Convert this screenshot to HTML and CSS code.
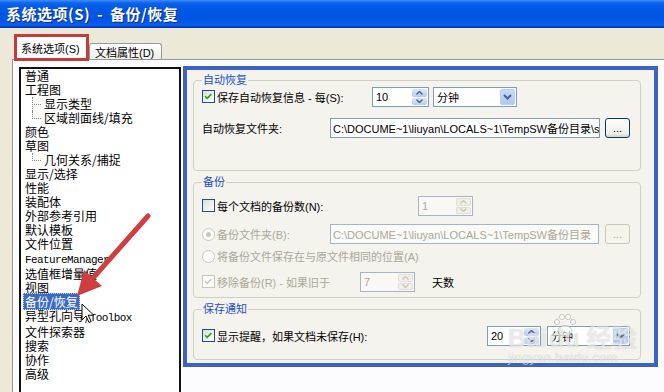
FILE: index.html
```html
<!DOCTYPE html>
<html lang="zh-CN">

<head>
  <meta charset="UTF-8">
  <title>系统选项(S) - 备份/恢复</title>
  <link rel="stylesheet" href="styles.css">
</head>

<body>
  <div class="titlebar"><span class="title">系统选项(S) - 备份/恢复</span></div>

  <div class="tabs">
    <div class="tab active">系统选项(S)</div>
    <div class="tab">文档属性(D)</div>
  </div>

  <div class="page">
    <ul class="tree">
      <li>普通</li>
      <li>工程图</li>
      <li class="child more">显示类型</li>
      <li class="child">区域剖面线/填充</li>
      <li>颜色</li>
      <li>草图</li>
      <li class="child">几何关系/捕捉</li>
      <li>显示/选择</li>
      <li>性能</li>
      <li>装配体</li>
      <li>外部参考引用</li>
      <li>默认模板</li>
      <li>文件位置</li>
      <li><span class="en">FeatureManager</span></li>
      <li>选值框增量值</li>
      <li>视图</li>
      <li><span class="sel">备份/恢复</span></li>
      <li>异型孔向导/<span class="en">Toolbox</span></li>
      <li>文件探索器</li>
      <li>搜索</li>
      <li>协作</li>
      <li>高级</li>
    </ul>

    <div class="frame">
      <!-- auto recover -->
      <fieldset class="group g1">
        <legend>自动恢复</legend>
        <div class="row">
          <label class="opt w170"><span class="cb on"><svg viewBox="0 0 13 13"><path d="M2.5 6.2l2.4 2.5 5-5"/></svg></span>保存自动恢复信息 - 每(S):</label>
          <div class="spin w57"><span class="val">10</span><span class="btns"><span class="sb"><svg viewBox="0 0 7 4"><path d="M0.5 3.5l3-3 3 3"/></svg></span><span class="sb"><svg viewBox="0 0 7 4"><path d="M0.5 0.5l3 3 3-3"/></svg></span></span></div>
          <div class="combo w84"><span class="val">分钟</span><span class="drop"><svg viewBox="0 0 9 6"><path d="M1 1l3.5 3.5 3.5-3.5"/></svg></span></div>
        </div>
        <div class="row mt11">
          <span class="w128">自动恢复文件夹:</span>
          <div class="field w270">C:\DOCUME~1\liuyan\LOCALS~1\TempSW备份目录\s</div>
          <div class="btn">...</div>
        </div>
      </fieldset>

      <!-- backup -->
      <fieldset class="group g2">
        <legend>备份</legend>
        <div class="row">
          <label class="opt w216"><span class="cb"></span>每个文档的备份数(N):</label>
          <div class="spin w55 off"><span class="val">1</span><span class="btns"><span class="sb"><svg viewBox="0 0 7 4"><path d="M0.5 3.5l3-3 3 3"/></svg></span><span class="sb"><svg viewBox="0 0 7 4"><path d="M0.5 0.5l3 3 3-3"/></svg></span></span></div>
        </div>
        <div class="row mt8">
          <label class="opt w128 dim"><span class="rb on"></span>备份文件夹(B):</label>
          <div class="field w269 off">C:\DOCUME~1\liuyan\LOCALS~1\TempSW备份目录</div>
          <div class="btn off">...</div>
        </div>
        <div class="row short mt3">
          <label class="opt dim"><span class="rb"></span>将备份文件保存在与原文件相同的位置(A)</label>
        </div>
        <div class="row mt7">
          <label class="opt w158 dim"><span class="cb on off"><svg viewBox="0 0 13 13"><path d="M2.5 6.2l2.4 2.5 5-5"/></svg></span>移除备份(R) - 如果旧于</label>
          <div class="spin w55 off"><span class="val">7</span><span class="btns"><span class="sb"><svg viewBox="0 0 7 4"><path d="M0.5 3.5l3-3 3 3"/></svg></span><span class="sb"><svg viewBox="0 0 7 4"><path d="M0.5 0.5l3 3 3-3"/></svg></span></span></div>
          <span class="days">天数</span>
        </div>
      </fieldset>

      <!-- save notification -->
      <fieldset class="group g3">
        <legend>保存通知</legend>
        <div class="row">
          <label class="opt w285"><span class="cb on"><svg viewBox="0 0 13 13"><path d="M2.5 6.2l2.4 2.5 5-5"/></svg></span>显示提醒，如果文档未保存(H):</label>
          <div class="spin w54"><span class="val">20</span><span class="btns"><span class="sb"><svg viewBox="0 0 7 4"><path d="M0.5 3.5l3-3 3 3"/></svg></span><span class="sb"><svg viewBox="0 0 7 4"><path d="M0.5 0.5l3 3 3-3"/></svg></span></span></div>
          <div class="combo w83"><span class="val">分钟</span><span class="drop"><svg viewBox="0 0 9 6"><path d="M1 1l3.5 3.5 3.5-3.5"/></svg></span></div>
        </div>
      </fieldset>
    </div>
  </div>

  <!-- annotation arrow and mouse pointer drawn over the dialog -->
  <svg class="marks" width="664" height="392" viewBox="0 0 664 392">
    <line x1="148" y1="216" x2="93" y2="278" stroke="#cf3f3f" stroke-width="5" stroke-linecap="round"/>
    <polygon points="77,296 84,270 102,286" fill="#cf3f3f"/>
    <path d="M82 304v16l4-4 3 6.5 2.2-1-3-6.3h5.6z" fill="#fff" stroke="#000" stroke-width="1" stroke-linejoin="round"/>
    <!-- watermark paw -->
    <g fill="rgba(255,255,255,0.6)" stroke="rgba(130,130,130,0.4)" stroke-width="1">
      <ellipse cx="565" cy="331" rx="7" ry="5.5"/>
      <circle cx="557" cy="322" r="2.6"/>
      <circle cx="562" cy="317" r="2.6"/>
      <circle cx="568" cy="317" r="2.6"/>
      <circle cx="573" cy="322" r="2.6"/>
    </g>
  </svg>

  <div class="watermark">
    <div class="wm-big">Bai<span class="gap"></span>du 经验</div>
    <div class="wm-small">jingyan.baidu.com</div>
  </div>
</body>

</html>
```

FILE: styles.css
```css
body {
  margin: 0;
  width: 664px;
  height: 392px;
  overflow: hidden;
  position: relative;
  background: #ece9d8;
  color: #000;
  font: 11px "Liberation Sans", "Noto Sans CJK SC", sans-serif;
}

.titlebar {
  height: 28px;
  box-sizing: border-box;
  padding-left: 6px;
  display: flex;
  align-items: center;
  background: linear-gradient(#3d8ffc 0, #0d63ec 3px, #0058e6 8px, #0054e2 20px, #0a61ef 25px, #003ec9 27px, #0030a6 28px);
}

.title {
  color: #fff;
  font: bold 15px "Noto Sans CJK SC", sans-serif;
  line-height: 18px;
  letter-spacing: 0.5px;
  word-spacing: 3px;
  text-shadow: 1px 1px 0 #0b2b86;
}

/* tabs */

.tabs {
  height: 31px;
  box-sizing: border-box;
  padding-left: 14px;
  display: flex;
  align-items: flex-end;
}

.tab {
  box-sizing: border-box;
  width: 73px;
  height: 16px;
  padding: 2px 0 0 5px;
  border: 1px solid #919b9c;
  border-bottom: none;
  border-radius: 3px 3px 0 0;
  background: linear-gradient(#fff, #f1efe8);
  line-height: 14px;
  white-space: nowrap;
}

.tab.active {
  width: 75px;
  height: 27px;
  margin-bottom: -2px;
  padding: 5px 0 0 4px;
  border: 3px solid #c43b3c;
  border-radius: 0;
  background: #fff;
  position: relative;
  z-index: 1;
}

/* tab page */

.page {
  height: 333px;
  box-sizing: border-box;
  margin-left: 12px;
  padding: 6px 0 0 6px;
  border-top: 1px solid #919b9c;
  border-left: 1px solid #919b9c;
  background: #fcfcfe;
  display: flex;
  align-items: flex-start;
  gap: 2px;
}

.tree {
  list-style: none;
  margin: 1px 0 0;
  padding: 0 0 0 4px;
  width: 162px;
  height: 340px;
  box-sizing: border-box;
  border: 2px solid #111;
  background: #fff;
  font: 12px "Noto Sans CJK SC", sans-serif;
  line-height: 14px;
  white-space: nowrap;
}

/* child rows with dotted connectors */
.tree .child {
  position: relative;
  padding-left: 19px;
}

.tree .child::before {
  content: '';
  position: absolute;
  left: 7px;
  top: 0;
  width: 8px;
  height: 7px;
  border-left: 1px dotted #8a8a8a;
  border-bottom: 1px dotted #8a8a8a;
}

.tree .child.more::after {
  content: '';
  position: absolute;
  left: 7px;
  top: 7px;
  bottom: 0;
  border-left: 1px dotted #8a8a8a;
}

.en {
  font-family: "Liberation Mono", monospace;
  font-size: 11px;
  letter-spacing: -0.6px;
}

.sel {
  margin-left: -2px;
  padding: 0 2px;
  background: #3a6ac3;
  color: #fff;
  outline: 1px dotted #c9d6ee;
  outline-offset: -1px;
}

/* highlighted right pane */

.frame {
  width: 475px;
  height: 301px;
  box-sizing: border-box;
  padding: 4px 0 0 6px;
  border: 4px solid #3c63c2;
  background: #f4f3ee;
}

.group {
  width: 448px;
  min-width: 0;
  box-sizing: border-box;
  margin: 0;
  padding: 0 0 0 8px;
  border: 1px solid #d0d0bf;
  border-radius: 4px;
}

.group + .group {
  margin-top: 5px;
}

.group legend {
  padding: 0 1px;
  line-height: 12px;
  color: #1d4fcc;
}

.g1 {
  padding-top: 1px;
  padding-bottom: 32px;
}

.g2 {
  padding-top: 8px;
  padding-bottom: 5px;
}

.g3 {
  padding-top: 11px;
  padding-bottom: 13px;
}

.row {
  height: 20px;
  display: flex;
  align-items: center;
  white-space: nowrap;
}

.row.short {
  height: 18px;
}

.mt3 { margin-top: 3px; }
.mt7 { margin-top: 7px; }
.mt8 { margin-top: 8px; }
.mt11 { margin-top: 11px; }

.w54 { width: 54px; }
.w55 { width: 55px; }
.w57 { width: 57px; }
.w83 { width: 83px; }
.w84 { width: 84px; }
.w128 { width: 128px; }
.w158 { width: 158px; }
.w170 { width: 170px; }
.w216 { width: 216px; }
.w269 { width: 269px; }
.w270 { width: 270px; }
.w285 { width: 285px; }

.opt {
  flex: none;
  display: flex;
  align-items: center;
  gap: 2px;
}

.dim {
  color: #aca899;
}

.cb {
  width: 13px;
  height: 13px;
  box-sizing: border-box;
  margin-top: -2px;
  border: 1px solid #1c5180;
  background: linear-gradient(135deg, #dcdcd7, #fff);
  display: flex;
}

.cb svg {
  width: 11px;
  height: 11px;
  fill: none;
  stroke: #21a121;
  stroke-width: 1.8;
}

.cb.off {
  border-color: #cac8bb;
  background: #fff;
}

.cb.off svg {
  stroke: #cac8bb;
}

.rb {
  width: 13px;
  height: 13px;
  box-sizing: border-box;
  border: 1px solid #cac8bb;
  border-radius: 50%;
  background: #fff;
  display: flex;
  align-items: center;
  justify-content: center;
}

.rb.on::after {
  content: '';
  width: 5px;
  height: 5px;
  border-radius: 50%;
  background: #cac8bb;
}

/* inputs */

.spin,
.combo,
.field {
  flex: none;
  height: 20px;
  box-sizing: border-box;
  border: 1px solid #7f9db9;
  background: #fff;
  display: flex;
  align-items: center;
}

.spin .val,
.combo .val {
  flex: 1;
  padding-left: 3px;
}

.btns {
  width: 15px;
  height: 16px;
  margin-right: 1px;
  display: flex;
  flex-direction: column;
  gap: 1px;
}

.sb {
  flex: 1;
  border-radius: 2px;
  background: linear-gradient(#dbe5fd, #b8ccf7);
  display: flex;
  align-items: center;
  justify-content: center;
}

.sb svg {
  width: 7px;
  height: 4px;
  fill: none;
  stroke: #4d6185;
  stroke-width: 1.4;
}

.spin.off {
  border-color: #a3b4cb;
  background: #f9f8f4;
  color: #aca899;
}

.spin.off .sb {
  background: #f1efe6;
  box-shadow: inset 0 0 0 1px #e2dfd4;
}

.spin.off .sb svg {
  stroke: #c9c7ba;
}

.combo {
  margin-left: 4px;
}

.w83.combo {
  margin-left: 6px;
}

.drop {
  width: 15px;
  height: 16px;
  margin-right: 1px;
  box-sizing: border-box;
  border: 1px solid #bacdf5;
  border-radius: 2px;
  background: linear-gradient(#c9d9fd, #b1c6f4);
  display: flex;
  align-items: center;
  justify-content: center;
}

.drop svg {
  width: 9px;
  height: 6px;
  fill: none;
  stroke: #4d6185;
  stroke-width: 2;
}

.field {
  padding-left: 2px;
  overflow: hidden;
  white-space: nowrap;
}

.field.off {
  border-color: #a3b4cb;
  background: #fafaf7;
  color: #aca899;
}

.btn {
  flex: none;
  width: 25px;
  height: 20px;
  box-sizing: border-box;
  margin-left: 5px;
  border: 1px solid #003c74;
  border-radius: 3px;
  background: linear-gradient(#fff, #f0efea 80%, #d8d2c6);
  display: flex;
  align-items: center;
  justify-content: center;
  line-height: 16px;
}

.btn.off {
  margin-left: 6px;
  border-color: #c9c7ba;
  background: #f5f4ea;
  color: #aca899;
}

.days {
  margin-left: 17px;
}

/* overlays */

.marks {
  position: absolute;
  left: 0;
  top: 0;
  pointer-events: none;
}

.watermark {
  position: absolute;
  left: 508px;
  top: 322px;
  color: rgba(255, 255, 255, 0.6);
  text-shadow: 0 0 1px rgba(120, 120, 120, 0.4);
  pointer-events: none;
}

.wm-big {
  font: bold 25px "Liberation Sans", "Noto Sans CJK SC", sans-serif;
  line-height: 32px;
}

.gap {
  display: inline-block;
  width: 2px;
}

.wm-small {
  margin-top: -4px;
  font: 13px "Liberation Sans", sans-serif;
  letter-spacing: 0.3px;
}
```
